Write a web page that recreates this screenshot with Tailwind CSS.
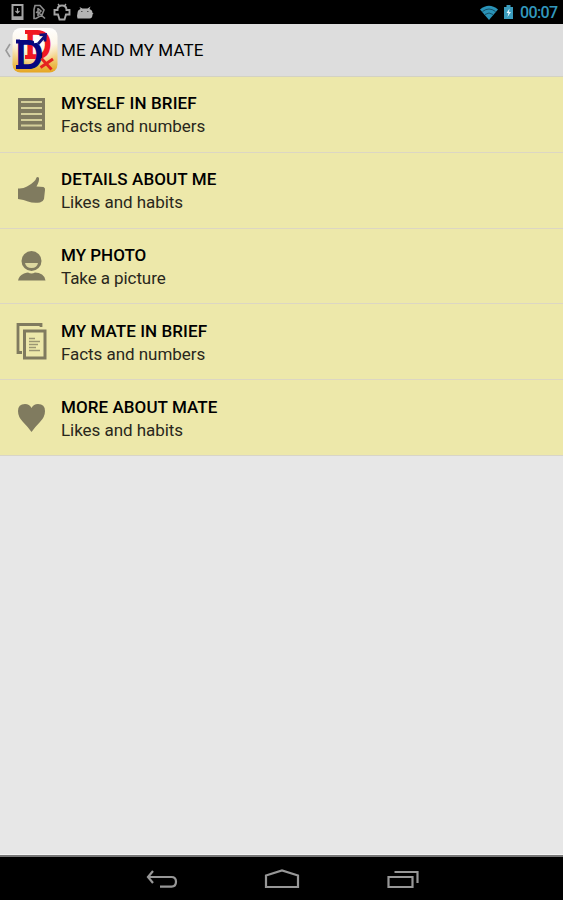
<!DOCTYPE html>
<html lang="en">
<head>
    <meta charset="UTF-8">
    <meta name="viewport" content="width=device-width, initial-scale=1.0">
    <title>Me and my mate</title>
    <script src="https://cdn.jsdelivr.net/npm/@tailwindcss/browser@4"></script>
</head>
<body class="bg-[#e7e7e7] font-[Roboto,sans-serif] text-black">
<div class="flex h-[900px] w-[563px] flex-col overflow-hidden">

    <!-- Status bar -->
    <div class="flex h-6 shrink-0 items-center justify-between bg-black pr-[5px] pl-2.5">
        <svg class="h-6 w-[90px]" viewBox="10 0 90 24" fill="none" stroke="#a5a5a5">
            <rect x="12.5" y="5" width="10" height="14" stroke-width="2"/>
            <path d="M12 17.500h11" stroke-width="2.500"/>
            <path d="M17.500 8v5M15.500 11l2 2 2-2" stroke-width="1.200"/>
            <path d="M35 5.500h5l4 4.500-2 5-6 3.500h-2v-9zM38 8v8M38 8.500l3 2.500-3 3M36 12l6 3M41 15l4 3.500" stroke="#8c8c8c" stroke-width="1.600"/>
            <path d="M58 4l2 2.500M66 4l-2 2.500" stroke-width="1.300"/>
            <path d="M57.500 10q0-4.500 4.500-4.500t4.500 4.500h3v4.500h-3.500l-1.500 5h-5l-1.500-5H54.500V10z" stroke-width="1.900"/>
            <path d="M77.500 18.500q-1-2 0-5.500q0-3 3-4l-1-2 3 1.500h5l3-2-1 2.500q3 1 3 4l1 .5-1 1q0 4-3 4z" fill="#b4b4b4" stroke="none"/>
            <path d="M81 11.500h1.500M87 11.500h1.500" stroke="#555" stroke-width="1.200"/>
        </svg>
        <div class="flex items-center">
            <svg class="h-6 w-10" viewBox="480 0 40 24">
                <path d="M480 9.500q9-7.500 18 0l-9 10.500z" fill="#2a93b8"/>
                <path d="M482.500 11.500q6.500-5 13 0M485 14.500q4-3 8 0" fill="none" stroke="#0b3443" stroke-width=".7"/>
                <path d="M504 7h2.500V5h4v2h2.500v12h-9z" fill="#3b9cbd"/>
                <path d="M509.500 8.500l-3 4.500h2l-1 4 3.500-5h-2z" fill="#e4f8ff"/>
            </svg>
            <span class="w-[38px] pt-px text-[16px] leading-6 font-medium tracking-[-0.6px] whitespace-nowrap text-[#3298bd]">00:07</span>
        </div>
    </div>

    <!-- Action bar -->
    <div class="flex h-[53px] shrink-0 items-center border-b border-[#d3d2c3] bg-[#dddddd]">
        <svg class="h-[52px] w-[61px] shrink-0 overflow-visible" viewBox="0 24 61 52">
            <defs>
                <linearGradient id="gold" x1="0" y1="0" x2="0" y2="1">
                    <stop offset="0" stop-color="#fff"/>
                    <stop offset=".35" stop-color="#fdf6e6"/>
                    <stop offset=".75" stop-color="#efc664"/>
                    <stop offset="1" stop-color="#e5a522"/>
                </linearGradient>
                <radialGradient id="shine" cx=".5" cy=".4" r=".5">
                    <stop offset="0" stop-color="#fff"/>
                    <stop offset="1" stop-color="#fff" stop-opacity="0"/>
                </radialGradient>
            </defs>
            <path d="M10 44l-4 6.500 4 6.500" fill="none" stroke="#9a9a9a" stroke-width="1.600"/>
            <rect x="12.500" y="28" width="45" height="44.500" rx="8" fill="url(#gold)"/>
            <rect x="12.500" y="28" width="45" height="44.500" rx="8" fill="url(#shine)"/>
            <text x="25" y="59" font-family="Liberation Sans, sans-serif" font-weight="700" font-size="42" textLength="27" lengthAdjust="spacingAndGlyphs" fill="#f01822">D</text>
            <path d="M25 30h5v4h-5zM25 55h5v4h-5z" fill="#f01822"/>
            <text x="15.500" y="69" font-family="Liberation Sans, sans-serif" font-weight="700" font-size="43" textLength="28" lengthAdjust="spacingAndGlyphs" fill="#06077f">D</text>
            <path d="M16 39.400h4v4h-4zM16 65h4v4h-4z" fill="#06077f"/>
            <path d="M34 42l5-1M36 39l3 4 4 1M39 41l6-5" stroke="#fff" stroke-width="2.500" fill="none"/>
            <path d="M38 44l7-8M39.500 35l6-.5-.5 7" stroke="#10107c" stroke-width="2.700" fill="none"/>
            <path d="M41.500 58.500l10 11M53 59L40.500 67.500" stroke="#e52220" stroke-width="2.900"/>
        </svg>
        <h1 class="text-[17px] leading-5 tracking-[0.1px] whitespace-nowrap">ME AND MY MATE</h1>
    </div>

    <!-- Menu -->
    <ul class="shrink-0 bg-[#ede8aa] text-[17px]">
        <li class="flex h-[76px] border-b border-[#dcd6c3]">
            <svg class="mr-[11px] ml-3.5 h-[75px] w-9" viewBox="0 0 36 75" fill="#807b5f">
                <path d="M4 21h27v32H4z"/>
                <path d="M7 25h21M7 31h21M7 37h21M7 43h21M7 48.500h21" stroke="#d5d09b" stroke-width="2.200"/>
            </svg>
            <div class="pt-[15px] leading-[23px] whitespace-nowrap">
                <div class="font-medium tracking-[0.13px]">MYSELF IN BRIEF</div>
                <div class="tracking-[-0.05px] text-[#29271c]">Facts and numbers</div>
            </div>
        </li>
        <li class="flex h-[76px] border-b border-[#dcd6c3]">
            <svg class="mr-[11px] ml-3.5 h-[75px] w-9" viewBox="0 0 36 75" fill="#807b5f">
                <path d="M4 35.500q5 .5 9-2 4-2 7-5 2-2 2.500-4 1.500-1 2.500.5 .5 3-2.500 8.500l7 .5q2 1 1.500 3l-1 9q-1 3-4 3.500-7 1-12-1-4-2-10-2.500z"/>
            </svg>
            <div class="pt-[15px] leading-[23px] whitespace-nowrap">
                <div class="font-medium tracking-[0.1px]">DETAILS ABOUT ME</div>
                <div class="tracking-[-0.05px] text-[#29271c]">Likes and habits</div>
            </div>
        </li>
        <li class="flex h-[75px] border-b border-[#dcd6c3]">
            <svg class="mr-[11px] ml-3.5 h-[74px] w-9" viewBox="0 0 36 74" fill="#807b5f">
                <circle cx="17.500" cy="32" r="10"/>
                <path d="M11 34h13q-1 5-6.500 5T11 34z" fill="#ddd8a0"/>
                <path d="M4 51.500q1-5 6-7 3-1 4-1 3.500 2 7 0 4 0 7 2 3 2 3.500 6z"/>
            </svg>
            <div class="pt-[15px] leading-[23px] whitespace-nowrap">
                <div class="font-medium">MY PHOTO</div>
                <div class="tracking-[-0.08px] text-[#29271c]">Take a picture</div>
            </div>
        </li>
        <li class="flex h-[76px] border-b border-[#dcd6c3]">
            <svg class="mr-[11px] ml-3.5 h-[75px] w-9" viewBox="0 0 36 75" fill="none" stroke="#807b5f">
                <path d="M27 23v-2.500H4v28h4" stroke-width="2.800"/>
                <path d="M10.500 27H31v27H10.500z" stroke-width="3"/>
                <path d="M15 34.500h6M15 37.500h11M15 40.500h9M15 43.500h7M15 46.500h11" stroke="#9b9673" stroke-width="1.300"/>
            </svg>
            <div class="pt-4 leading-[23px] whitespace-nowrap">
                <div class="font-medium tracking-[0.07px]">MY MATE IN BRIEF</div>
                <div class="tracking-[-0.05px] text-[#29271c]">Facts and numbers</div>
            </div>
        </li>
        <li class="flex h-[76px] border-b border-[#d8d5c8]">
            <svg class="mr-[11px] ml-3.5 h-[75px] w-9" viewBox="0 0 36 75" fill="#807b5f">
                <path d="M17.500 52Q14 47 9 42 4 37 4 31 4 24 11 24q4.500 0 6.500 4 2-4 6.500-4 7 0 7 7 0 6-5 11-5 5-8.500 10z"/>
            </svg>
            <div class="pt-4 leading-[23px] whitespace-nowrap">
                <div class="font-medium tracking-[0.07px]">MORE ABOUT MATE</div>
                <div class="tracking-[-0.05px] text-[#29271c]">Likes and habits</div>
            </div>
        </li>
    </ul>

    <div class="grow border-b border-[#f4f4f4]"></div>

    <!-- Navigation bar -->
    <div class="h-[45px] shrink-0 border-t-2 border-[#777] bg-black">
        <svg class="h-[43px] w-full" viewBox="0 857 563 43" fill="none" stroke="#979797" stroke-width="2.200">
            <path d="M153 871l-5 6 5 6M148 877h23.500q4.500 0 4.500 4.800t-4.500 4.800H160"/>
            <path d="M266 887v-11.500l16-5 16 5V887z"/>
            <path d="M388.500 877h24v10h-24zM394.500 872h23v11"/>
        </svg>
    </div>
</div>
</body>
</html>
